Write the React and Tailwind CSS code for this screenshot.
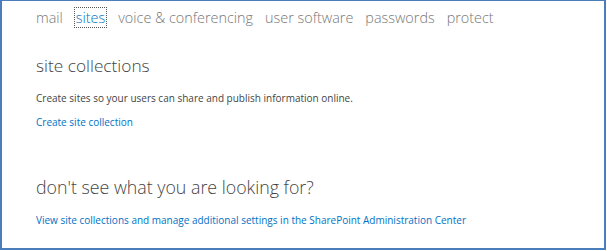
export default function App() {
  const tabs = ['mail', 'sites', 'voice & conferencing', 'user software', 'passwords', 'protect'];
  return (
    <div className="w-[607px] h-[251px] bg-white">
      <div className="w-[606px] h-[250px] border-l-2 border-t border-r-2 border-b-2 border-[#4a7ebb] pl-[34px] pt-[5px] font-['Open_Sans',sans-serif]">
        <nav className="flex items-center gap-[12px] h-[23px]">
          {tabs.map((t) => (
            <span
              key={t}
              className={
                t === 'sites'
                  ? 'text-[14.4px] font-light leading-[19px] text-[#0072c6] outline-1 outline-dotted outline-[#555] px-[1px]'
                  : 'text-[14.4px] font-light leading-[19px] text-[#777]'
              }
            >
              {t}
            </span>
          ))}
        </nav>
        <h2 className="mt-[24px] text-[17.3px] font-light leading-[26px] text-[#444]">site collections</h2>
        <p className="mt-[12px] text-[10px] leading-[14px] text-[#444]">
          Create sites so your users can share and publish information online.
        </p>
        <a href="#" className="block mt-[10px] text-[10px] leading-[14px] text-[#0072c6]">
          Create site collection
        </a>
        <h2 className="mt-[45px] text-[17.8px] font-light leading-[26px] text-[#444]">don't see what you are looking for?</h2>
        <a href="#" className="block mt-[13px] text-[10px] leading-[14px] text-[#0072c6]">
          View site collections and manage additional settings in the SharePoint Administration Center
        </a>
      </div>
    </div>
  );
}
